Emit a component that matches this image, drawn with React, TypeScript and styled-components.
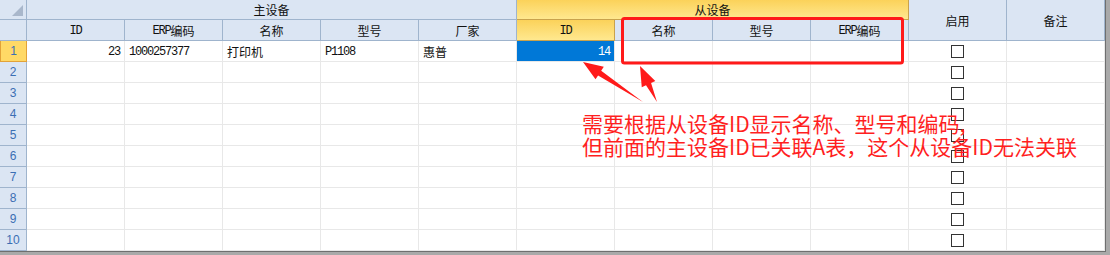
import React from "react";
import styled, { createGlobalStyle, css } from "styled-components";

const GlobalStyle = createGlobalStyle`
  html, body { margin: 0; padding: 0; background: #a9a9a9; overflow: hidden; }
  body { font-family: "Liberation Mono", "Noto Sans CJK SC", monospace; }
`;

const Frame = styled.div`
  position: relative;
  width: 1105px;
  height: 251px;
  background: #fff;
  border-right: 1px solid #6f6f6f;
  border-bottom: 1px solid #6f6f6f;
`;

const Grid = styled.div`
  display: grid;
  grid-template-columns: 27px repeat(11, 98px);
  grid-template-rows: 20px 21px repeat(10, 21px);
`;

const gold = css`
  background: linear-gradient(#fbd25a, #ffe88f);
  border-right-color: #c9a24c;
  border-bottom-color: #c9a24c;
`;

const HeadCell = styled.div<{ $col: string; $row: string; $gold?: boolean }>`
  grid-column: ${(p) => p.$col};
  grid-row: ${(p) => p.$row};
  box-sizing: border-box;
  display: flex;
  align-items: center;
  justify-content: center;
  background: #dbe5f3;
  border-right: 1px solid #9fb4cd;
  border-bottom: 1px solid #9fb4cd;
  font-size: 12px;
  color: #111;
  padding-top: 1px;
  ${(p) => p.$gold && gold}
`;

const Corner = styled(HeadCell)`
  position: relative;
  &::after {
    content: "";
    position: absolute;
    right: 3px;
    bottom: 3px;
    border-left: 11px solid transparent;
    border-bottom: 11px solid #a9b7cb;
  }
`;

const RowNum = styled.div<{ $active?: boolean }>`
  box-sizing: border-box;
  display: flex;
  align-items: center;
  justify-content: center;
  background: #dbe5f3;
  border-right: 1px solid #9fb4cd;
  border-bottom: 1px solid #9fb4cd;
  font-family: "Liberation Sans", "DejaVu Sans", sans-serif;
  font-size: 12px;
  color: #3b6fb3;
  ${(p) =>
    p.$active &&
    css`
      background: #ffd966;
      border: 1px solid #e2a238;
      border-top: none;
    `}
`;

const Cell = styled.div<{ $align?: "left" | "right" | "center"; $selected?: boolean }>`
  box-sizing: border-box;
  display: flex;
  align-items: center;
  justify-content: ${(p) =>
    p.$align === "right" ? "flex-end" : p.$align === "center" ? "center" : "flex-start"};
  padding: 1px 4px 0;
  border-right: 1px solid #e8e8e8;
  border-bottom: 1px solid #e8e8e8;
  font-size: 12px;
  color: #111;
  white-space: nowrap;
  ${(p) =>
    p.$selected &&
    css`
      background: #0078d7;
      color: #fff;
    `}
`;

const Mono = styled.span`
  letter-spacing: -1.2px;
`;

const Check = styled.span`
  box-sizing: border-box;
  width: 13px;
  height: 13px;
  border: 1px solid #333;
  background: #fff;
`;

const Overlay = styled.svg`
  position: absolute;
  left: 0;
  top: 0;
  pointer-events: none;
`;

const Note = styled.div`
  position: absolute;
  left: 582px;
  top: 112px;
  font-family: "Noto Sans CJK SC", sans-serif;
  font-size: 21px;
  line-height: 23px;
  color: #ff1f1f;
  white-space: nowrap;
  pointer-events: none;
`;

type Row = { id?: string; erp?: string; name?: string; model?: string; maker?: string; slaveId?: string };

const rows: Row[] = [
  { id: "23", erp: "1000257377", name: "打印机", model: "P1108", maker: "惠普", slaveId: "14" },
  {}, {}, {}, {}, {}, {}, {}, {}, {},
];

// tapered arrow: thin tail, widening shaft, triangular head
function arrowPoints(tx: number, ty: number, hx: number, hy: number) {
  const len = Math.hypot(hx - tx, hy - ty);
  const ux = (hx - tx) / len;
  const uy = (hy - ty) / len;
  const nx = -uy;
  const ny = ux;
  const headLen = 20;
  const headW = 7.5;
  const neck = 2.8;
  const bx = hx - ux * headLen;
  const by = hy - uy * headLen;
  const pts = [
    [tx, ty],
    [bx + nx * neck, by + ny * neck],
    [bx + nx * headW, by + ny * headW],
    [hx, hy],
    [bx - nx * headW, by - ny * headW],
    [bx - nx * neck, by - ny * neck],
  ];
  return pts.map((p) => p.join(",")).join(" ");
}

export default function App() {
  return (
    <>
      <GlobalStyle />
      <Frame>
        <Grid>
          <Corner $col="1" $row="1" />
          <HeadCell $col="1" $row="2" />
          <HeadCell $col="2 / span 5" $row="1">主设备</HeadCell>
          <HeadCell $col="7 / span 4" $row="1" $gold>从设备</HeadCell>
          <HeadCell $col="11" $row="1 / span 2">启用</HeadCell>
          <HeadCell $col="12" $row="1 / span 2">备注</HeadCell>

          <HeadCell $col="2" $row="2"><Mono>ID</Mono></HeadCell>
          <HeadCell $col="3" $row="2"><Mono>ERP</Mono>编码</HeadCell>
          <HeadCell $col="4" $row="2">名称</HeadCell>
          <HeadCell $col="5" $row="2">型号</HeadCell>
          <HeadCell $col="6" $row="2">厂家</HeadCell>
          <HeadCell $col="7" $row="2" $gold><Mono>ID</Mono></HeadCell>
          <HeadCell $col="8" $row="2">名称</HeadCell>
          <HeadCell $col="9" $row="2">型号</HeadCell>
          <HeadCell $col="10" $row="2"><Mono>ERP</Mono>编码</HeadCell>

          {rows.map((r, i) => (
            <React.Fragment key={i}>
              <RowNum $active={i === 0}>{i + 1}</RowNum>
              <Cell $align="right"><Mono>{r.id}</Mono></Cell>
              <Cell><Mono>{r.erp}</Mono></Cell>
              <Cell>{r.name}</Cell>
              <Cell><Mono>{r.model}</Mono></Cell>
              <Cell>{r.maker}</Cell>
              <Cell $align="right" $selected={i === 0}><Mono>{r.slaveId}</Mono></Cell>
              <Cell />
              <Cell />
              <Cell />
              <Cell $align="center"><Check /></Cell>
              <Cell />
            </React.Fragment>
          ))}
        </Grid>

        <Overlay width="1105" height="251">
          <rect x="622.5" y="18.5" width="280" height="44.5" rx="2" fill="none" stroke="#ff1a1a" strokeWidth="3" />
          <polygon points={arrowPoints(643, 102, 583, 62)} fill="#ff1a1a" />
          <polygon points={arrowPoints(657, 102, 640, 66)} fill="#ff1a1a" />
        </Overlay>

        <Note>
          需要根据从设备ID显示名称、型号和编码,
          <br />
          但前面的主设备ID已关联A表，这个从设备ID无法关联
        </Note>
      </Frame>
    </>
  );
}
